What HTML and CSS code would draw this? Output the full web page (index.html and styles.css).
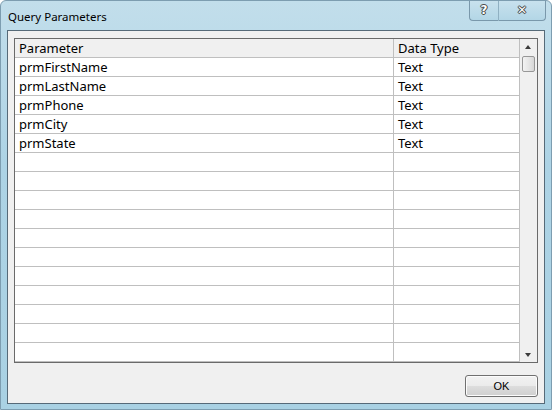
FILE: index.html
```html
<!DOCTYPE html>
<html>
<head>
<meta charset="utf-8">
<link rel="stylesheet" href="styles.css">
</head>
<body>
<div class="window">
  <div class="titlebar">
    <span class="title">Query Parameters</span>
    <div class="caption">
      <div class="cbtn help"><span>?</span></div>
      <div class="cbtn close"><span>✕</span></div>
    </div>
  </div>
  <div class="client">
    <div class="grid">
      <div class="table">
        <div class="row head"><div class="c1">Parameter</div><div class="c2">Data Type</div></div>
        <div class="row"><div class="c1">prmFirstName</div><div class="c2">Text</div></div>
        <div class="row"><div class="c1">prmLastName</div><div class="c2">Text</div></div>
        <div class="row"><div class="c1">prmPhone</div><div class="c2">Text</div></div>
        <div class="row"><div class="c1">prmCity</div><div class="c2">Text</div></div>
        <div class="row"><div class="c1">prmState</div><div class="c2">Text</div></div>
        <div class="row"><div class="c1"></div><div class="c2"></div></div>
        <div class="row"><div class="c1"></div><div class="c2"></div></div>
        <div class="row"><div class="c1"></div><div class="c2"></div></div>
        <div class="row"><div class="c1"></div><div class="c2"></div></div>
        <div class="row"><div class="c1"></div><div class="c2"></div></div>
        <div class="row"><div class="c1"></div><div class="c2"></div></div>
        <div class="row"><div class="c1"></div><div class="c2"></div></div>
        <div class="row"><div class="c1"></div><div class="c2"></div></div>
        <div class="row"><div class="c1"></div><div class="c2"></div></div>
        <div class="row"><div class="c1"></div><div class="c2"></div></div>
        <div class="row"><div class="c1"></div><div class="c2"></div></div>
      </div>
      <div class="scrollbar">
        <div class="arrow up"></div>
        <div class="thumb"></div>
        <div class="track"></div>
        <div class="arrow down"></div>
      </div>
    </div>
    <div class="footer">
      <div class="okbtn">OK</div>
    </div>
  </div>
</div>
</body>
</html>
```
FILE: styles.css
```css
html, body {
  margin: 0;
  padding: 0;
  background: #ffffff;
}
body {
  font-family: "Noto Sans", "Open Sans", sans-serif;
  font-size: 13px;
  color: #000;
}
.window {
  width: 552px;
  height: 410px;
  box-sizing: border-box;
  display: flex;
  flex-direction: column;
  background: linear-gradient(180deg, #c2deeb 0%, #add3e5 40%, #a9d1e3 100%);
  border: 1px solid #7d9db0;
  border-radius: 6px 6px 0 0;
  overflow: hidden;
}
.titlebar {
  height: 29px;
  display: flex;
  justify-content: space-between;
  align-items: flex-start;
  flex-shrink: 0;
}
.title {
  margin: 8px 0 0 7px;
  font-size: 11.5px;
  line-height: 16px;
}
.caption {
  display: flex;
  margin-right: 5px;
  margin-top: -1px;
}
.cbtn {
  height: 20px;
  border: 1px solid #7a98ab;
  border-top: none;
  background: linear-gradient(180deg, #c9e2ee 0%, #b3d6e6 100%);
  display: flex;
  align-items: center;
  justify-content: center;
  color: #fff;
  font-family: "DejaVu Sans", sans-serif;
  font-weight: bold;
  text-shadow: 0 0 1px #333, 0 0 1px #333, 1px 0 0 #555, -1px 0 0 #555, 0 1px 0 #555, 0 -1px 0 #555;
}
.help {
  width: 28px;
  border-radius: 0 0 0 4px;
  font-size: 12px;
}
.close {
  width: 46px;
  border-left: 1px solid #8fb0c2;
  border-radius: 0 0 4px 0;
  font-size: 12px;
}
.help {
  border-right: none;
}
.client {
  flex: 1;
  margin: 0 6px 5px 6px;
  border: 1px solid #566a78;
  background: #f0f0f0;
  display: flex;
  flex-direction: column;
  padding: 7px 6px 0 6px;
}
.grid {
  height: 323px;
  border: 1px solid #6a6a6a;
  background: #fff;
  display: flex;
  overflow: hidden;
}
.table {
  flex: 1;
  display: flex;
  flex-direction: column;
}
.row {
  display: flex;
  height: 18px;
  border-bottom: 1px solid #bfbfbf;
  flex-shrink: 0;
}
.row.head {
  background: #f0f0f0;
}
.c1, .c2 {
  line-height: 18px;
  padding-left: 4px;
  white-space: nowrap;
}
.c1 {
  width: 374px;
  border-right: 1px solid #bfbfbf;
}
.c2 {
  flex: 1;
  border-right: 1px solid #bfbfbf;
}
.scrollbar {
  width: 17px;
  background: #f0f0f0;
  display: flex;
  flex-direction: column;
  align-items: center;
}
.arrow {
  width: 17px;
  height: 17px;
  position: relative;
}
.arrow::after {
  content: "";
  position: absolute;
  left: 5px;
  width: 0;
  height: 0;
  border-left: 3.5px solid transparent;
  border-right: 3.5px solid transparent;
}
.arrow.up::after {
  top: 6px;
  border-bottom: 4px solid #3c3c3c;
}
.arrow.down::after {
  top: 8px;
  border-top: 4px solid #3c3c3c;
}
.thumb {
  width: 13px;
  height: 16px;
  box-sizing: border-box;
  border: 1px solid #979797;
  border-radius: 2px;
  background: linear-gradient(90deg, #f3f3f3 0%, #e6e6e6 50%, #d6d6d6 100%);
}
.track {
  flex: 1;
}
.footer {
  display: flex;
  justify-content: flex-end;
  padding-top: 12px;
}
.okbtn {
  width: 73px;
  height: 22px;
  box-sizing: border-box;
  border: 1px solid #707070;
  border-radius: 3px;
  background: linear-gradient(180deg, #f2f2f2 0%, #ebebeb 50%, #dddddd 51%, #cfcfcf 100%);
  display: flex;
  align-items: center;
  justify-content: center;
  font-family: "Liberation Sans", sans-serif;
  font-size: 11px;
  box-shadow: inset 0 0 0 1px #fcfcfc;
}
```
